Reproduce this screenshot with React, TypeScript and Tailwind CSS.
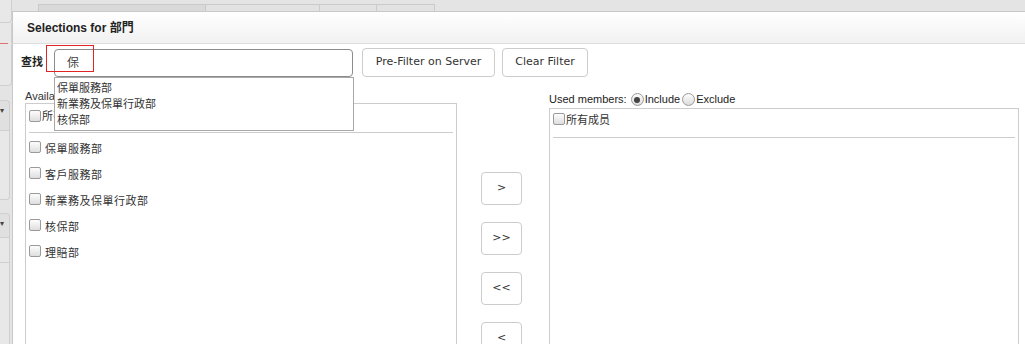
import React from 'react';

const cjk = { fontFamily: '"Liberation Sans", "Noto Sans CJK TC", sans-serif' };

function Box() {
  return (
    <span className="inline-block w-[12px] h-[12px] shrink-0 rounded-[2px] border border-[#9a9a9a] bg-gradient-to-b from-[#fdfdfd] to-[#dedede]" />
  );
}

function Radio({ checked }: { checked: boolean }) {
  return (
    <span className="inline-flex w-[13px] h-[13px] shrink-0 items-center justify-center rounded-full border border-[#9a9a9a] bg-gradient-to-b from-[#fdfdfd] to-[#dcdcdc]">
      {checked && <span className="block w-[6px] h-[6px] rounded-full bg-[#444]" />}
    </span>
  );
}

const items = ['保單服務部', '客戶服務部', '新業務及保單行政部', '核保部', '理賠部'];
const hints = ['保單服務部', '新業務及保單行政部', '核保部'];
const moves = ['>', '>>', '<<', '<'];

export default function App() {
  return (
    <div className="w-[1025px] h-[344px] overflow-hidden bg-[#e4e4e4] flex" style={cjk}>
      {/* left strip of background panels */}
      <div className="w-[12px] shrink-0 flex flex-col">
        <div className="h-[23px] border-b border-r border-[#cfcfcf] rounded-br-[4px] bg-[#e8e8e8]" />
        <div className="h-[20px] border-r border-[#cfcfcf] bg-[#e8e8e8]" />
        <div className="h-[1px] w-[8px] bg-[#e07070]" />
        <div className="h-[42px] border-r border-b border-[#cfcfcf] rounded-br-[4px] bg-[#e8e8e8]" />
        <div className="h-[14px]" />
        <div className="h-[30px] mr-[2px] border-t border-r border-[#cfcfcf] rounded-tr-[4px] bg-[#e0e0e0] text-[8px] leading-[20px] text-[#444]">▾</div>
        <div className="h-[70px] mr-[2px] border-t border-r border-b border-[#cfcfcf] rounded-br-[4px] bg-[#e8e8e8]" />
        <div className="h-[13px]" />
        <div className="h-[24px] mr-[2px] border-t border-r border-[#cfcfcf] rounded-tr-[4px] bg-[#e0e0e0] text-[8px] leading-[20px] text-[#444]">▾</div>
        <div className="h-[25px] mr-[2px] border-t border-r border-[#cfcfcf] bg-[#e8e8e8]" />
        <div className="flex-1 mr-[2px] border-t border-r border-[#cfcfcf] bg-[#e8e8e8]" />
      </div>

      <div className="flex-1 flex flex-col">
        {/* background tabs */}
        <div className="h-[11px] shrink-0 flex items-end pl-[26px]">
          <div className="h-[7px] w-[168px] border border-b-0 border-[#cacaca] bg-[#d9d9d9]" />
          <div className="h-[7px] w-[114px] border border-b-0 border-l-0 border-[#cacaca] bg-[#e2e2e2]" />
          <div className="h-[7px] w-[57px] border border-b-0 border-l-0 border-[#cacaca] bg-[#e2e2e2]" />
          <div className="h-[7px] w-[58px] border border-b-0 border-l-0 border-[#cacaca] bg-[#e2e2e2]" />
        </div>

        {/* dialog */}
        <div className="relative flex-1 bg-white border-t border-l border-[#c8c8c8] flex flex-col">
          <div className="h-[32px] shrink-0 flex items-center pl-[14px] border-b border-[#dedede] bg-gradient-to-b from-white to-[#f1f1f1]">
            <span className="text-[12px] font-bold text-[#222]">Selections for 部門</span>
          </div>

          {/* filter row */}
          <div className="mt-[4px] h-[29px] flex items-center pl-[8px]">
            <span className="w-[33px] text-[11px] font-bold text-[#222]">查找</span>
            <div className="w-[299px] h-[28px] rounded-[4px] border border-[#8c8c8c] flex items-center pl-[12px] text-[12px] text-[#444]">
              保
            </div>
            <button
              className="ml-[9px] w-[133px] h-[29px] rounded-[4px] border border-[#cccccc] bg-white text-[11px] text-[#333]"
              style={{ fontFamily: '"DejaVu Sans", sans-serif' }}
            >
              Pre-Filter on Server
            </button>
            <button
              className="ml-[7px] w-[86px] h-[29px] rounded-[4px] border border-[#cccccc] bg-white text-[11px] text-[#333]"
              style={{ fontFamily: '"DejaVu Sans", sans-serif' }}
            >
              Clear Filter
            </button>
          </div>

          {/* member lists */}
          <div className="mt-[11px] flex">
            <div className="ml-[12px] w-[432px] flex flex-col">
              <div className="h-[15px] pt-[2px] text-[11px] leading-[13px] text-[#333]">Available members:</div>
              <div className="h-[260px] border border-[#cccccc] flex flex-col px-[3px]">
                <div className="h-[28px] flex items-start pt-[6px] gap-[1px]">
                  <Box />
                  <span className="text-[11px] leading-[12px] text-[#333]">所有成员</span>
                </div>
                <div className="h-[1px] bg-[#cccccc]" />
                <div className="pt-[8px] flex flex-col">
                  {items.map((t) => (
                    <div key={t} className="h-[26px] flex items-start gap-[4px]">
                      <Box />
                      <span className="text-[11px] leading-[14px] pt-[1px] tracking-[0.5px] text-[#333]">{t}</span>
                    </div>
                  ))}
                </div>
              </div>
            </div>

            <div className="w-[92px] pt-[84px] pl-[24px] flex flex-col gap-[17px]">
              {moves.map((m) => (
                <button
                  key={m}
                  className="w-[41px] h-[33px] rounded-[4px] border border-[#cccccc] bg-white text-[11px] text-[#333]"
                  style={{ fontFamily: '"DejaVu Sans", sans-serif' }}
                >
                  {m}
                </button>
              ))}
            </div>

            <div className="w-[470px] flex flex-col">
              <div className="h-[20px] pt-[3px] flex items-center gap-[1px] text-[11px] text-[#222]">
                <span className="mr-[3px]">Used members:</span>
                <Radio checked />
                <span className="mr-[1px]">Include</span>
                <Radio checked={false} />
                <span>Exclude</span>
              </div>
              <div className="h-[260px] border border-[#cccccc] flex flex-col px-[3px]">
                <div className="h-[28px] flex items-start pt-[4px] gap-[1px]">
                  <Box />
                  <span className="text-[11px] leading-[14px] text-[#333]">所有成员</span>
                </div>
                <div className="h-[1px] bg-[#cccccc]" />
              </div>
            </div>
          </div>

          {/* autocomplete dropdown */}
          <div className="absolute left-[41px] top-[65px] w-[300px] h-[54px] border border-[#a8a8a8] bg-white pt-[2px] pl-[2px]">
            {hints.map((h) => (
              <div key={h} className="h-[16px] text-[11px] leading-[16px] text-[#333]">
                {h}
              </div>
            ))}
          </div>

          {/* highlight box */}
          <div className="absolute left-[33px] top-[33px] w-[48px] h-[27px] border border-[#e02424]" />
        </div>
      </div>
    </div>
  );
}
